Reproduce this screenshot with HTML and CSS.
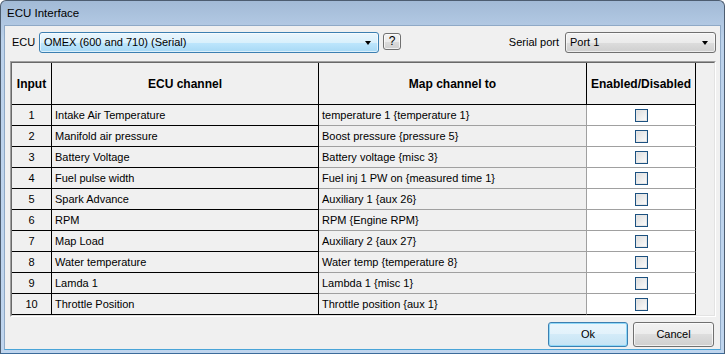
FILE: index.html
```html
<!DOCTYPE html>
<html>
<head>
<meta charset="utf-8">
<title>ECU Interface</title>
<link rel="stylesheet" href="styles.css">
</head>
<body>
<div class="window">
  <div class="titlebar">ECU Interface</div>
  <div class="client">
    <div class="toprow">
      <span class="lbl lbl-ecu">ECU</span>
      <div class="combo combo-focus combo-ecu">
        <span class="combo-text">OMEX (600 and 710) (Serial)</span>
        <span class="arrow"></span>
      </div>
      <div class="help-btn">?</div>
      <div class="spacer"></div>
      <span class="lbl lbl-port">Serial port</span>
      <div class="combo combo-port">
        <span class="combo-text">Port 1</span>
        <span class="arrow"></span>
      </div>
    </div>

    <div class="grid-frame">
      <div class="grid-inner">
        <div class="grid">
          <div class="hd c-in">Input</div>
          <div class="hd c-ecu">ECU channel</div>
          <div class="hd c-map">Map channel to</div>
          <div class="hd c-en">Enabled/Disabled</div>

          <div class="cell c-in num">1</div><div class="cell c-ecu">Intake Air Temperature</div><div class="cell c-map">temperature 1 {temperature 1}</div><div class="cell c-en"><span class="chk"></span></div>
          <div class="cell c-in num">2</div><div class="cell c-ecu">Manifold air pressure</div><div class="cell c-map">Boost pressure {pressure 5}</div><div class="cell c-en"><span class="chk"></span></div>
          <div class="cell c-in num">3</div><div class="cell c-ecu">Battery Voltage</div><div class="cell c-map">Battery voltage {misc 3}</div><div class="cell c-en"><span class="chk"></span></div>
          <div class="cell c-in num">4</div><div class="cell c-ecu">Fuel pulse width</div><div class="cell c-map">Fuel inj 1 PW on {measured time 1}</div><div class="cell c-en"><span class="chk"></span></div>
          <div class="cell c-in num">5</div><div class="cell c-ecu">Spark Advance</div><div class="cell c-map">Auxiliary 1 {aux 26}</div><div class="cell c-en"><span class="chk"></span></div>
          <div class="cell c-in num">6</div><div class="cell c-ecu">RPM</div><div class="cell c-map">RPM {Engine RPM}</div><div class="cell c-en"><span class="chk"></span></div>
          <div class="cell c-in num">7</div><div class="cell c-ecu">Map Load</div><div class="cell c-map">Auxiliary 2 {aux 27}</div><div class="cell c-en"><span class="chk"></span></div>
          <div class="cell c-in num">8</div><div class="cell c-ecu">Water temperature</div><div class="cell c-map">Water temp {temperature 8}</div><div class="cell c-en"><span class="chk"></span></div>
          <div class="cell c-in num">9</div><div class="cell c-ecu">Lamda 1</div><div class="cell c-map">Lambda 1 {misc 1}</div><div class="cell c-en"><span class="chk"></span></div>
          <div class="cell c-in num last">10</div><div class="cell c-ecu last">Throttle Position</div><div class="cell c-map last">Throttle position {aux 1}</div><div class="cell c-en last"><span class="chk"></span></div>
        </div>
      </div>
    </div>

    <div class="buttons">
      <div class="btn btn-default">Ok</div>
      <div class="btn">Cancel</div>
    </div>
  </div>
</div>
</body>
</html>
```

FILE: styles.css
```css
html, body {
  margin: 0;
  padding: 0;
  background: #ffffff;
  overflow: hidden;
}

body {
  font-family: "Liberation Sans", Arial, sans-serif;
  font-size: 11px;
  color: #000;
}

.window {
  width: 725px;
  height: 354px;
  box-sizing: border-box;
  display: flex;
  flex-direction: column;
  background: linear-gradient(#a2bad6, #bcd2eb 40px, #bfd5ee);
  border: 1px solid #4d5d70;
  border-bottom-color: #3b6b9a;
  border-radius: 6px 6px 0 0;
}

.titlebar {
  height: 24px;
  line-height: 24px;
  padding-left: 6px;
  font-size: 11.5px;
  color: #000;
  flex: none;
}

.client {
  flex: 1;
  margin: 0 3px 3px 3px;
  background: #f0f0f0;
  border: 1px solid #8fa9c6;
  border-bottom-color: #49a4d8;
  display: flex;
  flex-direction: column;
}

.toprow {
  display: flex;
  align-items: flex-start;
  padding: 6px 4px 0 7px;
  height: 21px;
}

.lbl {
  line-height: 21px;
  white-space: nowrap;
}

.lbl-ecu {
  width: 27px;
  flex: none;
}

.lbl-port {
  margin-right: 6px;
}

.spacer {
  flex: 1;
}

.combo {
  position: relative;
  height: 21px;
  box-sizing: border-box;
  border: 1px solid #707070;
  border-radius: 3px;
  background: linear-gradient(#f2f2f2 0%, #ebebeb 50%, #dddddd 50%, #cfcfcf 100%);
  box-shadow: inset 0 0 0 1px rgba(255,255,255,0.6);
  flex: none;
}

.combo-focus {
  border-color: #3c7fb1;
  background: linear-gradient(#eaf6fd 0%, #d9f0fc 50%, #bee6fd 50%, #a7d9f5 100%);
}

.combo-ecu {
  width: 340px;
}

.combo-port {
  width: 151px;
}

.combo-text {
  position: absolute;
  left: 4px;
  top: 0;
  line-height: 19px;
  white-space: nowrap;
}

.arrow {
  position: absolute;
  right: 7px;
  top: 8px;
  width: 0;
  height: 0;
  border-left: 3.5px solid transparent;
  border-right: 3.5px solid transparent;
  border-top: 4px solid #000;
}

.help-btn {
  width: 18px;
  height: 17px;
  box-sizing: border-box;
  margin-left: 4px;
  margin-top: 1px;
  border: 1px solid #707070;
  border-radius: 3px;
  background: linear-gradient(#f2f2f2 0%, #ebebeb 50%, #dddddd 50%, #cfcfcf 100%);
  box-shadow: inset 0 0 0 1px rgba(255,255,255,0.7);
  text-align: center;
  line-height: 15px;
  font-size: 12px;
  flex: none;
}

.grid-frame {
  margin: 8px 4px 0 5px;
  height: 256px;
  box-sizing: border-box;
  border: 1px solid;
  border-color: #a0a0a0 #ffffff #ffffff #a0a0a0;
}

.grid-inner {
  height: 100%;
  box-sizing: border-box;
  border: 1px solid;
  border-color: #696969 #e3e3e3 #e3e3e3 #696969;
  background: #f0f0f0;
}

.grid {
  display: grid;
  grid-template-columns: 40px 267px 268px 109px;
  grid-template-rows: 42px repeat(10, 21px);
  width: 684px;
}

.grid > div {
  box-sizing: border-box;
  border-right: 1px solid #000;
  border-bottom: 1px solid #000;
  white-space: nowrap;
  overflow: hidden;
}

.hd {
  font-weight: bold;
  font-size: 12px;
  display: flex;
  align-items: center;
  justify-content: center;
  background: #f0f0f0;
}

.cell {
  line-height: 20px;
  padding-left: 3px;
  background: #f0f0f0;
}

.cell.num {
  padding-left: 0;
  text-align: center;
}

.grid > .cell.c-map {
  border-bottom-color: #a0a0a0;
  border-right-color: #a0a0a0;
  padding-left: 3px;
}

.grid > .cell.c-en {
  background: #ffffff;
  border-bottom-color: #a0a0a0;
  display: flex;
  align-items: center;
  justify-content: center;
  padding-left: 0;
}

.grid > .cell.last {
  border-bottom-color: #000;
}

.chk {
  display: block;
  width: 13px;
  height: 13px;
  box-sizing: border-box;
  border: 1px solid #1c5180;
  background: linear-gradient(135deg, #dcdcdc, #f8f8f8 85%);
  box-shadow: inset 0 0 0 1px #e6e6e6;
}

.buttons {
  display: flex;
  justify-content: flex-end;
  gap: 5px;
  padding: 5px 6px 0 0;
}

.btn {
  width: 80px;
  height: 25px;
  box-sizing: border-box;
  border: 1px solid #707070;
  border-radius: 3px;
  background: linear-gradient(#f2f2f2 0%, #ebebeb 50%, #dddddd 50%, #cfcfcf 100%);
  box-shadow: inset 0 0 0 1px rgba(255,255,255,0.7);
  text-align: center;
  line-height: 23px;
}

.btn + .btn {
  width: 81px;
}

.btn-default {
  border-color: #3c7fb1;
  box-shadow: inset 0 0 0 1px #8fd8f8;
  background: linear-gradient(#eaf6fd 0%, #e2f2fb 50%, #d3ebf8 50%, #c6e3f4 100%);
}
```
